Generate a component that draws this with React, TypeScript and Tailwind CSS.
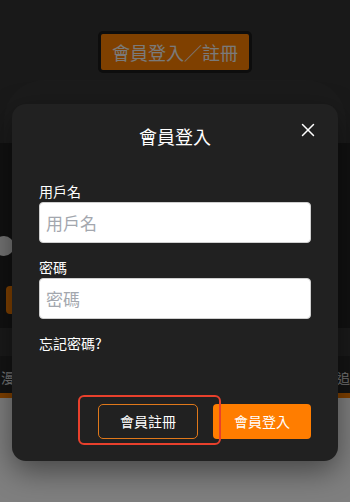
import { X } from 'lucide-react';

const font = "font-['Noto_Sans_CJK_TC','Noto_Sans',sans-serif]";

function BackgroundPage() {
  return (
    <div className="flex h-full flex-col bg-white">
      <div className="flex h-[143px] flex-col bg-[#333333]">
        <div className="flex h-[80px] items-start justify-center pt-[31px]">
          <button className="flex h-[42px] w-[154px] items-center justify-center rounded-[5px] border-[3px] border-[#1a1a1a] bg-[#ff8000] text-[18px] text-[#f4f4f4]">
            會員登入／註冊
          </button>
        </div>
        <div className="mx-[4px] flex-1 rounded-t-[40px] bg-[#363636]" />
      </div>
      <div className="flex h-[185px] flex-col bg-[#222222] pt-[93px]">
        <div className="-ml-[6px] h-[20px] w-[20px] rounded-full bg-[#e8e8e8]" />
        <div className="ml-[6px] mt-[30px] h-[28px] w-[60px] rounded-[4px] bg-[#ff8000]" />
      </div>
      <div className="h-[28px] bg-[#343434]" />
      <div className="flex h-[37px] items-center justify-between bg-[#282828] pt-[6px] text-[14px] text-[#eeeeee]">
        <span className="ml-[1px]">漫畫</span>
        <span className="mr-[0px] text-[13px]">追</span>
      </div>
      <div className="h-[5px] bg-[#ff8000]" />
      <div className="flex-1 bg-white" />
    </div>
  );
}

export default function App() {
  return (
    <div className={`relative h-[502px] w-[350px] overflow-hidden ${font}`}>
      <BackgroundPage />
      <div className="absolute inset-0 bg-black/50" />

      <div className="absolute inset-0 flex justify-center pt-[104px]">
        <div className="relative flex h-[357px] w-[326px] flex-col rounded-[14px] bg-[#212121] px-[27px] pb-[22px] pt-[20px] text-white shadow-[0_10px_30px_rgba(0,0,0,0.45)]">
          <div className="relative flex h-[24px] items-center justify-center">
            <h2 className="text-[18px] leading-[24px]">會員登入</h2>
            <button className="absolute right-[-8px] top-[-5px] text-white">
              <X size={22} strokeWidth={1.6} />
            </button>
          </div>

          <label className="mt-[33px] text-[14px] leading-[20px]">用戶名</label>
          <input
            placeholder="用戶名"
            className="mt-[1px] h-[41px] w-full rounded-[4px] border border-[#cfcfcf] bg-white pl-[6px] text-[17px] text-black outline-none placeholder:text-[#a3a7ae]"
          />

          <label className="mt-[14px] text-[14px] leading-[20px]">密碼</label>
          <input
            type="password"
            placeholder="密碼"
            className="mt-[1px] h-[41px] w-full rounded-[4px] border border-[#cfcfcf] bg-white pl-[6px] text-[17px] text-black outline-none placeholder:text-[#a3a7ae]"
          />

          <div className="mt-[14px] text-[14px] leading-[20px]">忘記密碼?</div>

          <div className="mt-auto flex justify-end gap-[15px]">
            <button className="h-[35px] w-[100px] rounded-[5px] border border-[#e0781a] text-[14px] text-white">
              會員註冊
            </button>
            <button className="h-[35px] w-[98px] rounded-[4px] bg-[#ff7d00] text-[14px] text-white">
              會員登入
            </button>
          </div>

          <div className="pointer-events-none absolute left-[66px] top-[291px] h-[50px] w-[143px] rounded-[6px] border-2 border-[#e8402c]" />
        </div>
      </div>
    </div>
  );
}
